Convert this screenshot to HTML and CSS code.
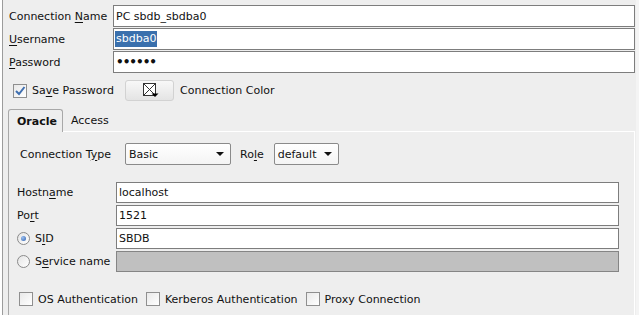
FILE: index.html
```html
<!DOCTYPE html>
<html lang="en">
<head>
    <meta charset="UTF-8">
    <title>New / Select Database Connection</title>
    <link rel="stylesheet" href="styles.css">
</head>
<body>
    <div class="frame">
        <!-- Connection fields -->
        <div class="main-grid">
            <div class="lbl"><span>Connection <u>N</u>ame</span></div>
            <div class="field">PC sbdb_sbdba0</div>
            <div class="lbl"><span><u>U</u>sername</span></div>
            <div class="field"><span class="selected">sbdba0</span></div>
            <div class="lbl"><span><u>P</u>assword</span></div>
            <div class="field password">&bull;&bull;&bull;&bull;&bull;&bull;</div>
        </div>

        <!-- Save password / colour -->
        <div class="options">
            <div class="save-opt">
                <span class="check">
                    <svg width="12" height="12" viewBox="0 0 12 12"><path d="M2 6 L5 9 L10.5 2" fill="none" stroke="#3f6fb0" stroke-width="2"/></svg>
                </span>
                <span>Sa<u>v</u>e Password</span>
            </div>
            <div class="color-btn">
                <svg width="17" height="15" viewBox="0 0 17 15">
                    <rect x="0.5" y="0.5" width="12" height="12" fill="#fff" stroke="#333"/>
                    <path d="M1 1 L12 12 M12 1 L1 12" stroke="#333" stroke-width="1"/>
                    <polygon points="8.5,10.5 15.5,10.5 12,14" fill="#000"/>
                </svg>
            </div>
            <span class="color-lbl">Connection Color</span>
        </div>

        <!-- Tabs -->
        <div class="tabs">
            <div class="tab active">Oracle</div>
            <div class="tab">Access</div>
        </div>

        <div class="panel">
            <div class="type-row">
                <span class="type-lbl">Connection T<u>y</u>pe</span>
                <div class="combo basic">Basic<span class="arrow"></span></div>
                <span class="role-lbl">Ro<u>l</u>e</span>
                <div class="combo role">default<span class="arrow"></span></div>
            </div>

            <div class="conn-grid">
                <div class="lbl"><span>Hostn<u>a</u>me</span></div>
                <div class="field">localhost</div>
                <div class="lbl"><span>Po<u>r</u>t</span></div>
                <div class="field">1521</div>
                <div class="lbl radio-lbl"><span class="radio on"></span><span>S<u>I</u>D</span></div>
                <div class="field">SBDB</div>
                <div class="lbl radio-lbl"><span class="radio"></span><span>S<u>e</u>rvice name</span></div>
                <div class="field disabled"></div>
            </div>

            <div class="auth-row">
                <span class="check"></span><span class="auth-lbl">OS Authentication</span>
                <span class="check"></span><span class="auth-lbl">Kerberos Authentication</span>
                <span class="check"></span><span class="auth-lbl">Proxy Connection</span>
            </div>
        </div>
    </div>
</body>
</html>
```

FILE: styles.css
```css
/* General */
body {
    margin: 0;
    background: #f4f4f4;
    font-family: 'DejaVu Sans', sans-serif;
    font-size: 11px;
    color: #111;
}

u {
    text-underline-offset: 2px;
}

.frame {
    box-sizing: border-box;
    width: 634px;
    height: 315px;
    margin-left: 2px;
    padding: 5px 1px 0 5px;
    background: #eeeeee;
    border-left: 1px solid #9c9c9c;
    box-shadow: -2px 0 0 #fff;
    overflow: hidden;
}

/* Text fields */
.main-grid {
    display: grid;
    grid-template-columns: 104px 1fr;
    grid-auto-rows: 22px;
    row-gap: 1px;
    margin-left: 1px;
}

.lbl {
    display: flex;
    align-items: center;
}

.field {
    box-sizing: border-box;
    display: flex;
    align-items: center;
    padding-left: 2px;
    background: #fff;
    border: 1px solid #7d7d7d;
}

.field .selected {
    background: #3a70ad;
    color: #fff;
    line-height: 16px;
    padding: 0 1px;
    margin-left: -1px;
}

.field.password {
    font-weight: bold;
    font-size: 12px;
    letter-spacing: -1px;
}

.field.disabled {
    background: #c0c0c0;
    border-color: #858585;
}

/* Save password row */
.options {
    display: flex;
    align-items: center;
    height: 21px;
    margin: 7px 0 0 5px;
}

.save-opt {
    display: flex;
    align-items: center;
    gap: 5px;
    width: 112px;
}

.check {
    box-sizing: border-box;
    display: inline-flex;
    align-items: center;
    justify-content: center;
    width: 14px;
    height: 14px;
    border: 1px solid #8f8f8f;
    background: linear-gradient(135deg, #e9e9e9, #ffffff);
}

.color-btn {
    box-sizing: border-box;
    display: flex;
    align-items: center;
    justify-content: center;
    width: 49px;
    height: 21px;
    padding-left: 3px;
    border: 1px solid #d2d2d2;
    border-radius: 3px;
    background: linear-gradient(#f8f8f8, #e4e4e4);
}

.color-lbl {
    margin-left: 6px;
}

/* Tabs */
.tabs {
    display: flex;
    height: 22px;
    margin-top: 8px;
    position: relative;
    z-index: 1;
}

.tab {
    display: flex;
    align-items: center;
    padding: 0 8px;
}

.tab.active {
    font-weight: bold;
    padding: 0 5px 0 8px;
    margin-bottom: -1px;
    border: 1px solid #a8a8a8;
    border-bottom: none;
    border-radius: 3px 3px 0 0;
    background: #eeeeee;
}

.panel {
    height: 200px;
    padding: 11px 15px 0 8px;
    border-top: 1px solid #fff;
    border-right: 1px solid #fff;
    border-left: 1px solid #a8a8a8;
}

/* Connection type row */
.type-row {
    display: flex;
    align-items: center;
    height: 22px;
    margin-left: 3px;
}

.type-lbl {
    width: 105px;
}

.combo {
    box-sizing: border-box;
    position: relative;
    display: flex;
    align-items: center;
    height: 22px;
    padding-left: 3px;
    border: 1px solid #8a8a8a;
    border-radius: 2px;
    background: linear-gradient(#ffffff, #f4f4f4);
}

.combo.basic {
    width: 106px;
}

.combo.role {
    width: 65px;
}

.combo .arrow {
    position: absolute;
    right: 6px;
    top: 8px;
    border-left: 4px solid transparent;
    border-right: 4px solid transparent;
    border-top: 4px solid #111;
}

.role-lbl {
    margin: 0 10px 0 9px;
}

/* Host / port / sid */
.conn-grid {
    display: grid;
    grid-template-columns: 99px 1fr;
    grid-auto-rows: 21px;
    row-gap: 2px;
    margin-top: 17px;
}

.radio-lbl {
    gap: 5px;
}

.radio {
    box-sizing: border-box;
    display: inline-flex;
    align-items: center;
    justify-content: center;
    width: 13px;
    height: 13px;
    border: 1px solid #8a8a8a;
    border-radius: 50%;
    background: linear-gradient(135deg, #e4e4e4, #ffffff);
}

.radio.on::after {
    content: '';
    width: 5px;
    height: 5px;
    border-radius: 50%;
    background: radial-gradient(circle at 35% 35%, #9cc0f0, #2d5fae);
}

/* Authentication options */
.auth-row {
    display: flex;
    align-items: center;
    margin: 20px 0 0 2px;
}

.auth-lbl {
    margin: 0 8px 0 5px;
}
```
